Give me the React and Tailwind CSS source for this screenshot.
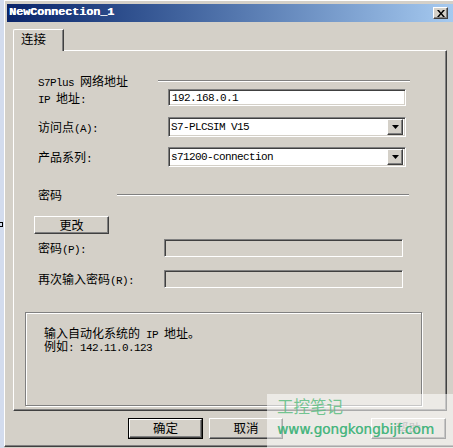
import React from 'react';

// SimSun-like metrics: latin runs 6px wide, CJK runs 12px
const Txt = ({ children }) => {
  const parts = String(children).split(/([\x00-\x7F]+)/).filter(Boolean);
  return (
    <span className="inline-flex items-baseline h-[12px] leading-[12px]">
      {parts.map((p, i) =>
        /^[\x00-\x7F]+$/.test(p) ? (
          <span key={i} className="font-['Liberation_Mono',monospace] text-[11px] tracking-[-0.6px] leading-[12px] whitespace-pre">
            {p}
          </span>
        ) : (
          <span key={i} className="font-['Noto_Sans_CJK_SC',sans-serif] text-[12px] leading-[12px]">
            {p}
          </span>
        )
      )}
    </span>
  );
};

const Etched = ({ w }) => (
  <div className={`h-[2px] border-t border-b border-t-[#808080] border-b-white ${w}`} />
);

const Sunken = ({ className = '', children }) => (
  <div
    className={`border border-t-[#808080] border-l-[#808080] border-r-white border-b-white shadow-[inset_1px_1px_0_#404040,inset_-1px_-1px_0_#d4d0c8] ${className}`}
  >
    {children}
  </div>
);

const Raised = ({ className = '', children }) => (
  <div
    className={`border border-t-white border-l-white border-r-[#404040] border-b-[#404040] shadow-[inset_-1px_-1px_0_#808080] bg-[#d4d0c8] flex items-center justify-center ${className}`}
  >
    {children}
  </div>
);

const Select = ({ value }) => (
  <Sunken className="w-[238px] h-[20px] bg-white flex items-center pl-[2px] pr-[2px]">
    <div className="flex-1 flex items-center text-black">
      <Txt>{value}</Txt>
    </div>
    <Raised className="w-[16px] h-[16px]">
      <svg width="7" height="4" viewBox="0 0 7 4">
        <path d="M0 0h7L3.5 4z" fill="#000" />
      </svg>
    </Raised>
  </Sunken>
);

export default function App() {
  return (
    <div className="w-[453px] h-[448px] relative overflow-hidden flex bg-[#d4d0c8] text-black">
      {/* desktop strip on the left */}
      <div className="w-[4px] h-full shrink-0 bg-[#d3dcee]" />

      {/* dialog window */}
      <div className="flex-1 h-[447px] flex flex-col border-l border-t border-white border-b border-b-[#404040] shadow-[inset_0_-1px_0_#808080] pl-[2px] pt-[3px]">
        {/* title bar */}
        <div className="h-[18px] shrink-0 flex items-center bg-linear-to-r from-[#0a246a] to-[#a6caf0] pl-[2px]">
          <span className="font-['Liberation_Mono',monospace] text-[11.7px] font-bold text-white leading-none [text-shadow:0.4px_0_0_#fff]">
            NewConnection_1
          </span>
          <Raised className="ml-auto mr-[5px] w-[15px] h-[12px]">
            <svg width="8" height="7" viewBox="0 0 8 7">
              <path d="M0 0h2l2 2.5L6 0h2L5 3.5 8 7H6L4 4.5 2 7H0l3-3.5z" fill="#000" />
            </svg>
          </Raised>
        </div>

        {/* client area */}
        <div className="pl-[6px] pt-[7px] flex flex-col">
          {/* tab */}
          <div className="relative z-10 w-[51px] h-[22px] -mb-[1px] bg-[#d4d0c8] border-l border-t border-white rounded-tl-[2px] border-r border-r-[#404040] shadow-[inset_-1px_0_0_#808080] flex items-center pl-[7px] pb-[2px]">
            <span className="font-['Noto_Sans_CJK_SC',sans-serif] text-[12.5px] leading-none">连接</span>
          </div>

          {/* tab panel */}
          <div className="w-[434px] h-[361px] border border-t-white border-l-white border-r-[#404040] border-b-[#404040] shadow-[inset_-1px_-1px_0_#808080] flex flex-col pl-[24px]">
            <div className="mt-[23px] h-[14px] flex items-center">
              <div className="w-[120px] flex items-center">
                <Txt>S7Plus 网络地址</Txt>
              </div>
              <Etched w="w-[252px]" />
            </div>

            <div className="mt-[1px] h-[17px] flex items-center">
              <div className="w-[130px] flex items-center">
                <Txt>IP 地址:</Txt>
              </div>
              <Sunken className="w-[238px] h-[17px] bg-white flex items-center pl-[3px]">
                <Txt>192.168.0.1</Txt>
              </Sunken>
            </div>

            <div className="mt-[11px] h-[20px] flex items-center">
              <div className="w-[130px] flex items-center">
                <Txt>访问点(A):</Txt>
              </div>
              <Select value="S7-PLCSIM V15" />
            </div>

            <div className="mt-[10px] h-[20px] flex items-center">
              <div className="w-[130px] flex items-center">
                <Txt>产品系列:</Txt>
              </div>
              <Select value="s71200-connection" />
            </div>

            <div className="mt-[21px] h-[14px] flex items-center">
              <div className="w-[79px] flex items-center">
                <Txt>密码</Txt>
              </div>
              <Etched w="w-[292px]" />
            </div>

            <Raised className="mt-[14px] -ml-[4px] w-[75px] h-[18px]">
              <Txt>更改</Txt>
            </Raised>

            <div className="mt-[5px] h-[18px] flex items-center">
              <div className="w-[126px] flex items-center">
                <Txt>密码(P):</Txt>
              </div>
              <Sunken className="w-[239px] h-[18px] bg-[#d4d0c8]" />
            </div>

            <div className="mt-[13px] h-[18px] flex items-center">
              <div className="w-[126px] flex items-center">
                <Txt>再次输入密码(R):</Txt>
              </div>
              <Sunken className="w-[239px] h-[18px] bg-[#d4d0c8]" />
            </div>

            <div className="mt-[24px] -ml-[13px] w-[397px] h-[94px] border border-[#808080] shadow-[inset_1px_1px_0_#fff,1px_1px_0_#fff] pl-[18px] pt-[13px] flex flex-col">
              <div className="h-[13px] flex items-center">
                <Txt>输入自动化系统的 IP 地址。</Txt>
              </div>
              <div className="h-[13px] flex items-center">
                <Txt>例如: 142.11.0.123</Txt>
              </div>
            </div>
          </div>

          {/* dialog buttons */}
          <div className="mt-[7px] flex">
            <div className="ml-[115px] w-[75px] h-[21px] border border-black">
              <Raised className="w-full h-full">
                <span className="font-['Noto_Sans_CJK_SC',sans-serif] text-[12.5px] leading-none">确定</span>
              </Raised>
            </div>
            <Raised className="ml-[6px] w-[74px] h-[21px]">
              <span className="font-['Noto_Sans_CJK_SC',sans-serif] text-[12.5px] leading-none">取消</span>
            </Raised>
            <Raised className="ml-[88px] w-[75px] h-[21px]">
              <span className="font-['Noto_Sans_CJK_SC',sans-serif] text-[12.5px] leading-none text-[#808080]">帮助</span>
            </Raised>
          </div>
        </div>
      </div>

      {/* stray cursor artefact at the left edge */}
      <div className="absolute left-0 top-[222px] w-[3px] h-[5px] border border-black border-l-0" />

      {/* watermark */}
      <div className="absolute left-[267px] top-[394px] w-[186px] h-[54px] bg-white/55 flex flex-col pl-[10px] pt-[2px]">
        <span className="font-['Noto_Sans_CJK_SC',sans-serif] text-[16.5px] leading-[20px] text-[#5cbd82]/85">
          工控笔记
        </span>
        <span className="mt-[2px] font-['DejaVu_Sans',sans-serif] text-[13.6px] leading-[22px] text-[#3fb37a]/85 [text-shadow:0.5px_0_0_rgba(63,179,122,0.85)]">
          www.gongkongbijf.com
        </span>
      </div>
    </div>
  );
}
